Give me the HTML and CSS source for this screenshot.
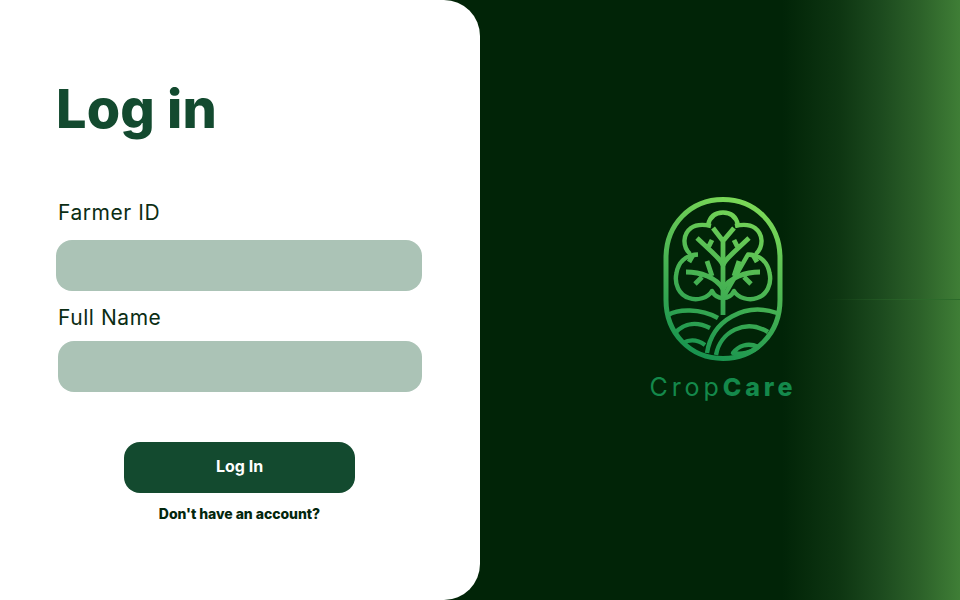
FILE: index.html
```html
<!DOCTYPE html>
<html lang="en">
<head>
<meta charset="utf-8">
<title>CropCare – Log in</title>
<link rel="stylesheet" href="styles.css">
</head>
<body>
<main class="page">
  <section class="form-panel">
    <h1 class="title">Log in</h1>
    <form class="form">
      <label class="label" for="farmer">Farmer ID</label>
      <input class="field field-first" id="farmer" type="text">
      <label class="label label-second" for="name">Full Name</label>
      <input class="field field-second" id="name" type="text">
      <button class="submit" type="button">Log In</button>
      <a class="signup" href="#">Don't have an account?</a>
    </form>
  </section>
  <section class="brand-panel">
    <div class="seam"></div>
    <div class="brand">
      <svg class="logo" width="126" height="170" viewBox="660 195 126 170" fill="none" stroke="url(#leaf)" stroke-width="4.400" stroke-linecap="butt" stroke-linejoin="round" aria-hidden="true">
        <defs>
          <linearGradient id="leaf" gradientUnits="userSpaceOnUse" x1="760" y1="200" x2="695" y2="358">
            <stop offset="0" stop-color="#7fdc58"/>
            <stop offset="0.5" stop-color="#4cb653"/>
            <stop offset="1" stop-color="#16924f"/>
          </linearGradient>
        </defs>
        <path stroke-width="5" d="M666 258C666 225 690 199.500 723 199.500C756 199.500 780 225 780 258V300C780 333 756 358.500 723 358.500C690 358.500 666 333 666 300Z"/>
        <path d="M723 298C718 298 714 295 712 291C708 298 697 301 689 298C679 295 674 284 676.500 273C678 264 684 255 698 254.500M690 254C682 246 683 234 691 228C696 224.500 702 224 711 226M708 225C710 216 716 212.500 723 212.500C730 212.500 736 216 738 225M735 226C744 224 750 224.500 755 228C763 234 764 246 756 254M748 254.500C762 255 768 264 769.500 273C772 284 767 295 757 298C749 301 738 298 734 291C732 295 728 298 723 298Z"/>
        <path stroke-width="4.800" d="M723 240V315M713 228L723 241L734 228"/>
        <path stroke-width="4.800" d="M697 238L712 252C717 257 721 260 723 265M712 240L708 248M749 238L734 252C729 257 725 260 723 265M734 240L738 248"/>
        <path stroke-width="4.800" d="M689 262L693 255M757 262L753 255"/>
        <path stroke-width="4.800" d="M686 272C700 272 716 277 723 289M760 272C746 272 730 277 723 289M707 261L712 276M739 261L734 276M695 284L702 277M751 284L744 277"/>
        <path d="M668 315C678 309 700 308 718 318"/>
        <path d="M777 313C745 302 712 320 707 353"/>
        <path d="M768 332C745 318 720 332 716 355"/>
        <path d="M675 333C685 322 698 322 710 328"/>
        <path d="M683 343C690 339 698 340 705 345"/>
        <path d="M758 347C748 342 738 346 733 353C741 355 751 353 758 347Z"/>
      </svg>
      <p class="wordmark"><span class="word-light">Crop</span><span class="word-bold">Care</span></p>
    </div>
  </section>
</main>
</body>
</html>
```

FILE: styles.css
```css
* {
  box-sizing: border-box;
}

html,
body {
  margin: 0;
  height: 100%;
}

body {
  font-family: Inter, "Liberation Sans", sans-serif;
  overflow: hidden;
}

.page {
  display: flex;
  width: 960px;
  height: 600px;
  background: linear-gradient(90deg, #012407 0%, #012407 81.5%, #0e3612 87.5%, #1c4a1e 91.7%, #2c6129 95.8%, #3f7e36 100%);
}

.form-panel {
  width: 480px;
  height: 600px;
  padding: 78px 58px 0 56px;
  background: #ffffff;
  border-radius: 0 36px 36px 0;
}

.title {
  margin: 0;
  height: 60px;
  font-size: 54px;
  line-height: 62px;
  font-weight: 800;
  letter-spacing: 0.2px;
  color: #134a2f;
}

.form {
  display: flex;
  flex-direction: column;
  margin-top: 59px;
}

.label {
  height: 30px;
  margin-left: 2px;
  font-size: 21px;
  line-height: 32px;
  letter-spacing: 0.55px;
  color: #0b2d14;
}

.field {
  display: block;
  height: 51px;
  border: 0;
  border-radius: 16px;
  background: #abc3b6;
}

.field-first {
  width: 366px;
  margin-top: 13px;
}

.field-second {
  width: 364px;
  margin-top: 9px;
  margin-left: 2px;
}

.label-second {
  margin-top: 11px;
}

.submit {
  width: 231px;
  height: 51px;
  margin: 50px 0 0 68px;
  padding-bottom: 4px;
  border: 0;
  border-radius: 16px;
  background: #134a2f;
  color: #ffffff;
  font-family: inherit;
  font-size: 16px;
  font-weight: 700;
}

.signup {
  width: 231px;
  margin: 12px 0 0 68px;
  text-align: center;
  font-size: 14px;
  line-height: 18px;
  font-weight: 800;
  letter-spacing: -0.05px;
  color: #03270d;
  text-decoration: none;
}

.brand-panel {
  position: relative;
  display: flex;
  flex: 1;
  padding: 195px 0 0 171px;
}

.seam {
  position: absolute;
  top: 299px;
  right: 0;
  width: 135px;
  height: 1px;
  background: linear-gradient(90deg, rgba(50, 110, 45, 0), #2b6a2a);
}

.brand {
  display: flex;
  flex-direction: column;
  align-items: center;
  width: 144px;
}

.logo {
  display: block;
}

.wordmark {
  margin: 7px 0 0;
  font-size: 25px;
  line-height: 30px;
  letter-spacing: 3.9px;
  white-space: nowrap;
  color: #14894b;
}

.word-light {
  font-weight: 400;
}

.word-bold {
  font-weight: 800;
}
```
